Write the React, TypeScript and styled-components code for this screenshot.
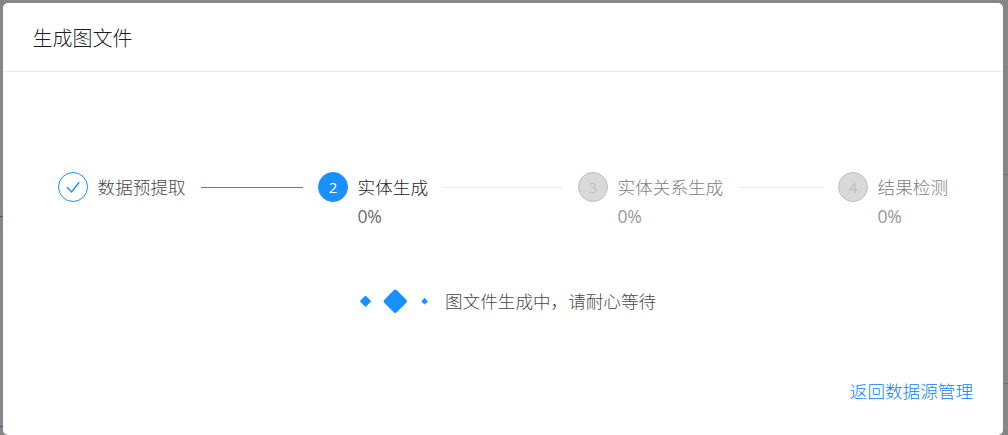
import React from "react";
import styled, { createGlobalStyle } from "styled-components";

const GlobalStyle = createGlobalStyle`
  * { box-sizing: border-box; }
  body {
    margin: 0;
    overflow: hidden;
    font-family: "Open Sans", "Noto Sans CJK SC", sans-serif;
    font-weight: 300;
    color: #484848;
  }
`;

const Backdrop = styled.div`
  display: flex;
  height: 435px;
  background: #868686;
  padding-top: 3px;
`;

const Edge = styled.div<{ $width: number; $color: string; $first: number; $second: number; $thick: number }>`
  width: ${(p) => p.$width}px;
  flex: none;
  background:
    linear-gradient(${(p) => p.$color}, ${(p) => p.$color}) 0 ${(p) => p.$first}px / 100% ${(p) => p.$thick}px no-repeat,
    linear-gradient(${(p) => p.$color}, ${(p) => p.$color}) 0 ${(p) => p.$second}px / 100% ${(p) => p.$thick}px no-repeat;
`;

const Modal = styled.section`
  display: flex;
  flex-direction: column;
  flex: 1;
  height: 432px;
  background: #fff;
  border-radius: 5px;
`;

const Header = styled.header`
  height: 69px;
  padding: 0 29.5px;
  border-bottom: 1px solid #ededed;
`;

const Title = styled.h1`
  margin: 0;
  font-size: 20px;
  font-weight: 300;
  line-height: 71px;
  height: 68px;
  color: #1c1c1c;
`;

const Steps = styled.div`
  display: flex;
  padding: 100px 55px 0;
  height: 184px;
`;

type Status = "finish" | "process" | "wait";

const Step = styled.div<{ $last: boolean }>`
  display: flex;
  gap: 9.6px;
  width: ${(p) => (p.$last ? "110px" : "260px")};
  flex: none;
`;

const circle = {
  finish: { bg: "#fff", border: "#1890ff", text: "#1890ff" },
  process: { bg: "#1890ff", border: "#1890ff", text: "#fff" },
  wait: { bg: "#d9d9d9", border: "#bfbfbf", text: "#bfbfbf" },
};

const StepIcon = styled.div<{ $status: Status }>`
  display: flex;
  align-items: center;
  justify-content: center;
  flex: none;
  width: 30px;
  height: 30px;
  border: 1px solid ${(p) => circle[p.$status].border};
  border-radius: 50%;
  background: ${(p) => circle[p.$status].bg};
  color: ${(p) => circle[p.$status].text};
  font-size: 15px;
  font-weight: 400;
`;

const StepContent = styled.div`
  flex: 1;
  min-width: 0;
`;

const StepHead = styled.div`
  display: flex;
  align-items: center;
  gap: 15px;
  height: 30px;
  padding-right: 15px;
`;

const StepTitle = styled.span<{ $status: Status }>`
  flex: none;
  font-size: 17.6px;
  line-height: 30px;
  white-space: nowrap;
  color: ${(p) => ({ finish: "#484848", process: "#1c1c1c", wait: "#7c7c7c" })[p.$status]};
`;

const Tail = styled.i<{ $done: boolean }>`
  flex: 1;
  height: 1px;
  margin-top: 1px;
  background: ${(p) => (p.$done ? "#1890ff" : "#ebebeb")};
`;

const Percent = styled.div<{ $status: Status }>`
  font-size: 17.6px;
  font-weight: 400;
  line-height: 29px;
  letter-spacing: -0.4px;
  color: ${(p) => (p.$status === "wait" ? "#989898" : "#6c6c6c")};
`;

const Waiting = styled.div`
  display: flex;
  align-items: center;
  height: 90px;
  padding-left: 356px;
`;

const Loader = styled.svg`
  width: 73px;
  height: 26px;
  margin-right: 13px;
  flex: none;
`;

const Message = styled.span`
  font-size: 17.6px;
  line-height: 30px;
`;

const Footer = styled.footer`
  display: flex;
  justify-content: flex-end;
  margin-top: auto;
  padding: 0 30px 29px;
`;

const BackLink = styled.a`
  font-size: 17.6px;
  line-height: 30px;
  color: #0884fa;
  cursor: pointer;
`;

const steps: { title: string; status: Status; percent?: string }[] = [
  { title: "数据预提取", status: "finish" },
  { title: "实体生成", status: "process", percent: "0%" },
  { title: "实体关系生成", status: "wait", percent: "0%" },
  { title: "结果检测", status: "wait", percent: "0%" },
];

const CheckMark = () => (
  <svg width="16" height="14" viewBox="0 0 16 14" fill="none" stroke="currentColor" strokeWidth="1.4">
    <path d="M2 7.2 6.6 12 14.2 2.2" />
  </svg>
);

const Diamond = ({ cx, size, r }: { cx: number; size: number; r: number }) => (
  <rect x={cx - size / 2} y={13.3 - size / 2} width={size} height={size} rx={r} fill="#1890ff" transform={`rotate(45 ${cx} 13.3)`} />
);

export default function App() {
  return (
    <>
      <GlobalStyle />
      <Backdrop>
        <Edge $width={3} $color="#285f98" $first={213} $second={423} $thick={1} />
        <Modal>
          <Header>
            <Title>生成图文件</Title>
          </Header>
          <Steps>
            {steps.map((s, i) => (
              <Step key={s.title} $last={i === steps.length - 1}>
                <StepIcon $status={s.status}>{s.status === "finish" ? <CheckMark /> : i + 1}</StepIcon>
                <StepContent>
                  <StepHead>
                    <StepTitle $status={s.status}>{s.title}</StepTitle>
                    {i < steps.length - 1 && <Tail $done={s.status === "finish"} />}
                  </StepHead>
                  {s.percent && <Percent $status={s.status}>{s.percent}</Percent>}
                </StepContent>
              </Step>
            ))}
          </Steps>
          <Waiting>
            <Loader viewBox="0 0 73 26">
              <Diamond cx={6.5} size={8.2} r={0.8} />
              <Diamond cx={36.3} size={17.8} r={2.2} />
              <Diamond cx={65.6} size={4.8} r={0.6} />
            </Loader>
            <Message>图文件生成中，请耐心等待</Message>
          </Waiting>
          <Footer>
            <BackLink>返回数据源管理</BackLink>
          </Footer>
        </Modal>
        <Edge $width={5} $color="#717171" $first={171} $second={380} $thick={1} />
      </Backdrop>
    </>
  );
}
